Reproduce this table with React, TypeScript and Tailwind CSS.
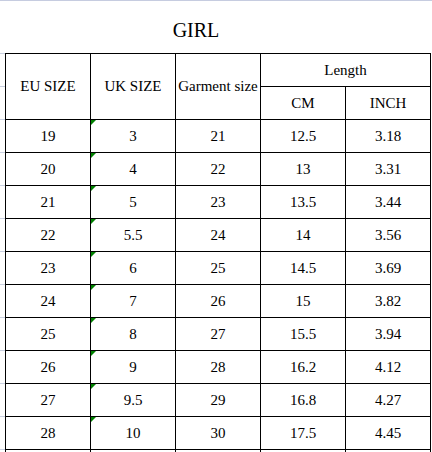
const rows = [
  ["19", "3", "21", "12.5", "3.18"],
  ["20", "4", "22", "13", "3.31"],
  ["21", "5", "23", "13.5", "3.44"],
  ["22", "5.5", "24", "14", "3.56"],
  ["23", "6", "25", "14.5", "3.69"],
  ["24", "7", "26", "15", "3.82"],
  ["25", "8", "27", "15.5", "3.94"],
  ["26", "9", "28", "16.2", "4.12"],
  ["27", "9.5", "29", "16.8", "4.27"],
  ["28", "10", "30", "17.5", "4.45"],
  ["", "", "", "", ""],
];

const cell =
  "flex items-center justify-center border-r border-b border-black h-[33px]";

function TextMark() {
  // little green "number stored as text" flag
  return (
    <svg className="absolute left-0 top-0" width="5" height="5" viewBox="0 0 5 5">
      <polygon points="0,0 5,0 0,5" fill="#008000" />
    </svg>
  );
}

export default function App() {
  return (
    <div className="h-[452px] w-[432px] overflow-hidden bg-white border-t border-[#c6cce0] [font-family:'Liberation_Serif','Times_New_Roman',serif] text-[15px] text-black leading-none">
      <div className="h-[52px] w-[392px] flex items-center justify-center pt-[5px] text-[20px]">
        GIRL
      </div>

      <div className="flex">
        {/* spreadsheet gridline stubs left of the table */}
        <div className="w-[5px] border-t border-[#c8cfdf]">
          {Array.from({ length: rows.length + 2 }).map((_, i) => (
            <div key={i} className="h-[33px] border-b border-[#c8cfdf]" />
          ))}
        </div>

        <div className="border-l border-t border-black">
          <div className="grid grid-cols-[repeat(5,85px)]">
            <div className={`${cell} row-span-2 h-[66px]`}>EU SIZE</div>
            <div className={`${cell} row-span-2 h-[66px]`}>UK SIZE</div>
            <div className={`${cell} row-span-2 h-[66px]`}>Garment size</div>
            <div className={`${cell} col-span-2`}>Length</div>
            <div className={cell}>CM</div>
            <div className={cell}>INCH</div>

            {rows.map((r, i) =>
              r.map((v, j) => (
                <div key={i + "-" + j} className={`${cell} relative`}>
                  {j === 1 && v !== "" && <TextMark />}
                  {v}
                </div>
              ))
            )}
          </div>
        </div>
      </div>
    </div>
  );
}
